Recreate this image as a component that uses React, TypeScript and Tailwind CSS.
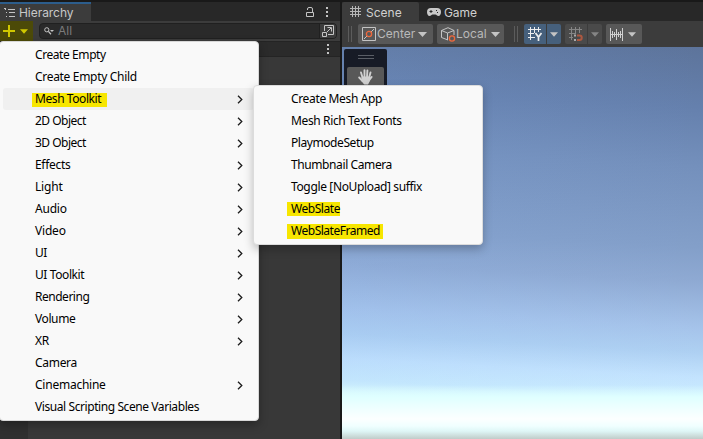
import React from "react";

type Item = { label: string; sub?: boolean; mark?: string; track?: string };

const mainItems: Item[] = [
  { label: "Create Empty", track: "tracking-[-0.42px]" },
  { label: "Create Empty Child", track: "tracking-[-0.31px]" },
  { label: "Mesh Toolkit", sub: true, mark: "top-[5px] h-[14px] -left-[3px] w-[75px]", track: "tracking-[-0.42px]" },
  { label: "2D Object", sub: true, track: "tracking-[-0.5px]" },
  { label: "3D Object", sub: true, track: "tracking-[-0.5px]" },
  { label: "Effects", sub: true, track: "tracking-[-0.3px]" },
  { label: "Light", sub: true },
  { label: "Audio", sub: true },
  { label: "Video", sub: true },
  { label: "UI", sub: true, track: "tracking-[-0.6px]" },
  { label: "UI Toolkit", sub: true, track: "tracking-[-0.4px]" },
  { label: "Rendering", sub: true, track: "tracking-[-0.48px]" },
  { label: "Volume", sub: true, track: "tracking-[-0.4px]" },
  { label: "XR", sub: true },
  { label: "Camera", track: "tracking-[-0.3px]" },
  { label: "Cinemachine", sub: true, track: "tracking-[-0.24px]" },
  { label: "Visual Scripting Scene Variables", track: "tracking-[-0.42px]" },
];

const subItems: Item[] = [
  { label: "Create Mesh App", track: "tracking-[-0.35px]" },
  { label: "Mesh Rich Text Fonts", track: "tracking-[-0.37px]" },
  { label: "PlaymodeSetup", track: "tracking-[-0.43px]" },
  { label: "Thumbnail Camera", track: "tracking-[-0.4px]" },
  { label: "Toggle [NoUpload] suffix", track: "tracking-[-0.36px]" },
  { label: "WebSlate", mark: "top-[4px] h-[14px] -left-[4px] w-[53px]", track: "tracking-[-0.45px]" },
  { label: "WebSlateFramed", mark: "top-[4px] h-[15px] -left-[4px] w-[96px]", track: "tracking-[-0.48px]" },
];

function Label({ item }: { item: Item }) {
  return (
    <span className={`relative whitespace-pre leading-[22px] ${item.track ?? "tracking-[-0.2px]"}`}>
      {item.mark && <span className={`absolute bg-[#f7e600] ${item.mark}`} />}
      <span className="relative">{item.label}</span>
    </span>
  );
}

function Chevron() {
  return (
    <svg width="6" height="9" viewBox="0 0 6 9" fill="none" stroke="#1c1c1c" strokeWidth="1.3">
      <path d="M1 .7 4.8 4.5 1 8.3" />
    </svg>
  );
}

function Caret({ className }: { className: string }) {
  return (
    <svg width="9" height="5" viewBox="0 0 9 5" className={className} fill="currentColor">
      <path d="M0 0h9L4.5 5z" />
    </svg>
  );
}

function Kebab() {
  return (
    <svg width="2" height="10" fill="#c4c4c4">
      <path d="M0 0h2v2H0zM0 4h2v2H0zM0 8h2v2H0z" />
    </svg>
  );
}

function Handle() {
  return <div className="h-4 w-1 border-x border-[#5c5c5c]" />;
}

function HierarchyPanel() {
  return (
    <section className="flex w-[340px] flex-col bg-[#383838]">
      <div className="flex h-[19px] bg-[#282828]">
        <div className="flex w-[91px] items-center border-t-2 border-[#2c5d8c] bg-[#3c3c3c] pl-1 text-[#c8c8c8]">
          <svg width="11" height="10" viewBox="0 0 11 10" fill="#c4c4c4">
            <path d="M0 0h2v1H0zM1 1h1v1H1zM4 1h7v1H4zM2 4h1v1H2zM5 4h6v1H5zM2 8h1v1H2zM5 8h6v1H5z" />
          </svg>
          <span className="ml-1 text-[12px] leading-4 tracking-[-0.05px]">Hierarchy</span>
        </div>
        <div className="flex flex-1 items-center justify-end gap-3 pr-3">
          <svg width="8" height="10" viewBox="0 0 8 10" fill="none" stroke="#c4c4c4">
            <path d="M.5 5.5h7v4h-7zM1.500 3V2A1.500 1.500 0 0 1 3 .5h2A1.500 1.500 0 0 1 6.500 2v3.500" />
          </svg>
          <Kebab />
        </div>
      </div>
      <div className="flex h-5 items-center bg-[#3c3c3c]">
        <div className="flex h-full w-[33px] items-center gap-[5px] bg-[#4c4a08] pl-[3px] text-[#d0c800]">
          <svg width="12" height="12" fill="currentColor">
            <path d="M5 0h2v5h5v2H7v5H5V7H0V5h5z" />
          </svg>
          <Caret className="w-[8px]" />
        </div>
        <div className="ml-[6px] mr-[3px] flex h-4 flex-1 items-center overflow-hidden rounded-[4px] border border-[#202020] bg-[#2a2a2a]">
          <svg width="10" height="8" viewBox="0 0 10 8" fill="none" stroke="#c4c4c4" className="ml-[4px]">
            <circle cx="2.8" cy="2.8" r="2.1" />
            <path d="m4.4 4.4 2.6 2.8" strokeWidth="1.3" />
            <path d="M6 3h4L8 5z" fill="#c4c4c4" stroke="none" />
          </svg>
          <span className="ml-[4px] text-[12px] leading-4 text-[#7b7b7b]">All</span>
          <div className="ml-auto flex h-4 w-[17px] items-center justify-center border-l border-[#202020] bg-[#3c3c3c]">
            <svg width="12" height="12" viewBox="0 0 12 12" fill="none" stroke="#c4c4c4">
              <path d="M2.5 6V.5h9v9H6M.5 7.5h4v4h-4zM5 7l4-4M5.5 2.5h4v4" />
            </svg>
          </div>
        </div>
      </div>
      <div className="flex h-4 items-center justify-end border-y border-[#242424] bg-[#2b2b2b] pr-[11px]">
        <Kebab />
      </div>
      <div className="flex flex-1">
        <div className="w-7 bg-[#303030]" />
      </div>
    </section>
  );
}

function ScenePanel() {
  return (
    <section className="flex flex-1 flex-col">
      <div className="flex h-[19px] bg-[#282828] text-[#d0d0d0]">
        <div className="flex w-[77px] items-center rounded-t-[2px] bg-[#3c3c3c] pl-[8px]">
          <svg width="11" height="11" viewBox="0 0 11 11" stroke="#c4c4c4">
            <path d="M2.5 0v11M5.5 0v11M8.5 0v11M0 2.5h11M0 5.5h11M0 8.5h11" opacity=".9" />
          </svg>
          <span className="ml-[5px] mt-[2px] text-[12px] leading-4">Scene</span>
        </div>
        <div className="flex items-center pl-[8px]">
          <svg width="14" height="8" viewBox="0 0 14 8" className="mt-px">
            <path fill="#c8c8c8" d="M4 0h6a4 4 0 0 1 4 4c0 2-1 4-2.500 4S9.400 6.500 8.500 6.500h-3C4.600 6.500 4 8 2.500 8S0 6 0 4a4 4 0 0 1 4-4z" />
            <path fill="#282828" d="M3.500 2h1v1h1v1h-1v1h-1V4h-1V3h1zM9 2h1v1H9zM10 4h1v1h-1z" />
          </svg>
          <span className="ml-[3px] mt-[2px] text-[12px] leading-4 tracking-[-0.1px]">Game</span>
        </div>
      </div>
      <div className="flex h-[26px] items-center bg-[#3c3c3c] pl-[6px] text-[#b9b9b9]">
        <Handle />
        <div className="ml-[6px] flex h-5 w-[75px] items-center rounded-[2px] bg-[#585858] pl-1">
          <svg width="14" height="14" viewBox="0 0 14 14" fill="none" stroke="#c4c4c4">
            <path d="M.5.5h13v13H.5zM2 12l3-3M9 5l3-3" />
            <circle cx="7" cy="7" r="2.600" stroke="#f0683c" strokeWidth="1.300" />
          </svg>
          <span className="ml-[1px] text-[12px] leading-4 tracking-[0.02px]">Center</span>
          <Caret className="ml-[3px] text-[#c4c4c4]" />
        </div>
        <div className="ml-1 flex h-5 w-[67px] items-center rounded-[2px] bg-[#585858] pl-1">
          <svg width="15" height="15" viewBox="0 0 15 15" fill="none" stroke="#c4c4c4">
            <path d="M7 13 .500 10.500v-7L7 .700l6 2.800V8M.500 3.500 6.500 6l6.500-2.500M6.500 6v7" />
            <circle cx="11" cy="11.500" r="2.600" stroke="#f0683c" strokeWidth="1.300" />
          </svg>
          <span className="text-[12px] leading-4">Local</span>
          <Caret className="ml-[4px] text-[#c4c4c4]" />
        </div>
        <div className="ml-[10px]"><Handle /></div>
        <div className="ml-[6px] flex h-5 gap-px overflow-hidden rounded-[2px]">
          <div className="flex w-[22px] items-center bg-[#46607c] pl-1">
            <svg width="15" height="15" viewBox="0 0 15 15" fill="none" stroke="#eee">
              <path d="M2.500 0v13M6.500 0v6M10.500 0v5M0 2.500h13M0 6.500h6M0 10.500h7" />
              <path d="m7.500 6 3 4 3-4M10.500 9.500V14" strokeWidth="1.700" />
            </svg>
          </div>
          <div className="flex w-[14px] items-center justify-center bg-[#46607c] text-[#c4c4c4]"><Caret className="w-2" /></div>
        </div>
        <div className="ml-1 flex h-5 gap-px overflow-hidden rounded-[2px]">
          <div className="flex w-[22px] items-center bg-[#4a4a4a] pl-1">
            <svg width="15" height="15" viewBox="0 0 15 15" fill="none" stroke="#858585">
              <path d="M2.500 0v13M6.500 0v7M10.500 0v6M0 2.500h13M0 6.500h7M0 10.500h4" />
              <path d="M8 8.500h2.500a2.200 2.200 0 0 1 0 4.500H8" stroke="#ad5840" strokeWidth="2" />
              <path d="M5 8.500h2M5 13h2" stroke="#aaa" strokeWidth="2" />
            </svg>
          </div>
          <div className="flex w-[14px] items-center justify-center bg-[#4a4a4a] text-[#858585]"><Caret className="w-2" /></div>
        </div>
        <div className="ml-1 flex h-5 w-9 items-center rounded-[2px] bg-[#585858] pl-1">
          <svg width="13" height="13" viewBox="0 0 13 13" stroke="#d0d0d0">
            <path d="M.5 0v13M12.500 0v13M6.500 1v11M2.500 3v7M4.500 4v5M8.500 4v5M10.500 3v7M0 6.500h13" />
          </svg>
          <Caret className="ml-[5px] w-2 text-[#c4c4c4]" />
        </div>
      </div>
      <div className="flex flex-1 flex-col bg-[linear-gradient(90deg,rgba(130,175,240,0.13),transparent),linear-gradient(183deg,#5d749b_0px,#6580ad_60px,#7490bc_120px,#839fc9_200px,#8faad3_235px,#a5c3ea_280px,#aed0f2_305px,#c3e3fe_330px,#cbedff_351px,#dfffff_365px)]">
        <div className="ml-[2px] mt-[2px] flex h-[60px] w-[43px] flex-col items-center rounded-[2px] bg-[#171b26] pt-[6px]">
          <div className="h-1 w-4 border-y border-[#5a5e66]" />
          <div className="mt-[8px] flex h-5 w-[37px] justify-center rounded-[2px] bg-[#585858] pt-[2px]">
            <svg width="15" height="16" viewBox="0 0 15 16" fill="none" stroke="#d0d0d0" strokeWidth="1.900" strokeLinecap="round">
              <path d="M4.500 8.500 3 3.500M6.500 8V1.200M9 8l.4-6.500M11 9l1.500-5.500M4.500 12 1.200 8.500M11 11.500l2.600-3.500" />
              <path d="M4.500 8.500h6.500v3L9.500 14.500h-3L4.500 12z" fill="#d0d0d0" strokeLinejoin="round" />
            </svg>
          </div>
        </div>
        <div className="mt-auto h-[54px] bg-[linear-gradient(180deg,transparent_0px,#dfffff_12px,#eaffff_20px,#fcffff_34px,#f0ffff_41px,#dff7f7_46px,#c0ccc9_54px)]" />
      </div>
    </section>
  );
}

export default function App() {
  return (
    <div className="relative flex h-[439px] w-[703px] overflow-hidden bg-[#191919] pt-[2px] font-['Inter','Liberation_Sans',sans-serif]">
      <HierarchyPanel />
      <div className="w-[2px]" />
      <ScenePanel />
      <nav className="absolute -left-px top-[41px] h-[380px] w-[260px] rounded-[4px] border border-[#d8d8d8] bg-[#f9f9f9] pt-[2px] font-['Noto_Sans','Open_Sans',sans-serif] text-[12px] text-black shadow-[0_4px_10px_rgba(0,0,0,0.3)]">
        {mainItems.map((item, i) => (
          <div
            key={item.label}
            className={`ml-[3px] mr-[4px] flex h-[22px] items-center justify-between rounded-[3px] pl-8 pr-[11px] ${i === 2 ? "bg-[#f0f0f0]" : ""}`}
          >
            <Label item={item} />
            {item.sub && <Chevron />}
          </div>
        ))}
      </nav>
      <nav className="absolute left-[253px] top-[85px] h-[160px] w-[230px] rounded-[4px] border border-[#dcdcdc] bg-[#f9f9f9] pl-[37px] pt-[2px] font-['Noto_Sans','Open_Sans',sans-serif] text-[12px] text-black shadow-[0_4px_10px_rgba(0,0,0,0.25)]">
        {subItems.map((item) => (
          <div key={item.label} className="flex h-[22px] items-center">
            <Label item={item} />
          </div>
        ))}
      </nav>
    </div>
  );
}
